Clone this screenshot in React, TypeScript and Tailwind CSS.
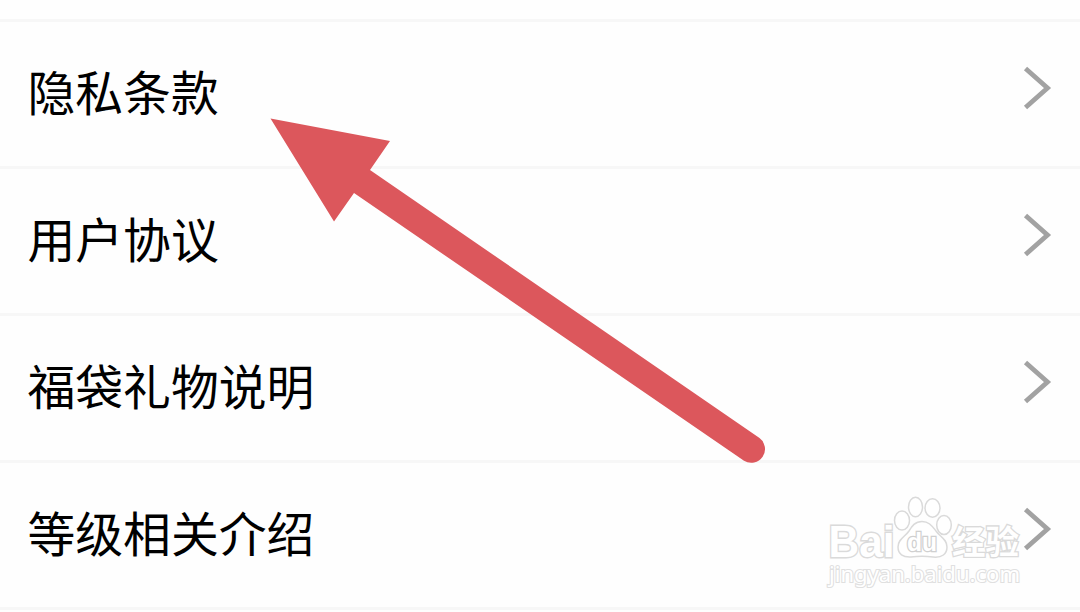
const itens = ["隐私条款", "用户协议", "福袋礼物说明", "等级相关介绍"];

function Chevron() {
  return (
    <svg width="30" height="48" viewBox="0 0 30 48" fill="none" className="shrink-0 blur-[0.7px]">
      <path d="M3.5 4.5 L25.5 24 L3.5 43.5" stroke="#a2a2a2" strokeWidth="4.8" />
    </svg>
  );
}

function Arrow() {
  return (
    <svg
      className="absolute left-0 top-0 pointer-events-none"
      width="1080"
      height="612"
      viewBox="0 0 1080 612"
    >
      <path
        d="M270.5 118.5 L390 141 L370 170 L759.5 438 A13.8 13.8 0 0 1 744 460.8 L354 193 L334 221.5 Z"
        fill="#dc575c"
      />
    </svg>
  );
}

function Watermark() {
  return (
    <svg
      className="absolute left-[820px] top-[485px] pointer-events-none"
      width="210"
      height="115"
      viewBox="0 0 210 115"
      fill="#ffffff"
      stroke="#dadada"
      strokeWidth="1.5"
    >
      <text
        x="8.5"
        y="71.5"
        fontSize="45"
        textLength="66"
        lengthAdjust="spacingAndGlyphs"
        strokeWidth="2.8"
        paintOrder="stroke"
        className="font-['Liberation_Sans',sans-serif] font-bold"
      >
        Bai
      </text>
      <ellipse cx="82" cy="35.5" rx="7.5" ry="9.5" />
      <ellipse cx="95.5" cy="22" rx="7" ry="9.8" />
      <ellipse cx="112.5" cy="23" rx="7.5" ry="9.3" />
      <ellipse cx="124" cy="40" rx="7.3" ry="9.5" />
      <path d="M102 36.5 C95 36.5 92 41 89 46 C85 52 78 54 78 62 C78 69 83 72.5 91 72 C99 71 105 71 113 72 C122 73 127 69 127 62 C127 54 120 52 116 46 C112 41 109 36.5 102 36.5 Z" />
      <text
        x="87"
        y="66"
        fontSize="25"
        textLength="30"
        lengthAdjust="spacingAndGlyphs"
        stroke="#d0d0d0"
        strokeWidth="2.6"
        paintOrder="stroke"
        className="font-['Liberation_Sans',sans-serif] font-bold"
      >
        du
      </text>
      <text
        x="132"
        y="69"
        fontSize="33.5"
        strokeWidth="2.6"
        paintOrder="stroke"
        className="font-['Noto_Sans_CJK_SC',sans-serif] font-bold"
      >
        经验
      </text>
      <text
        x="9"
        y="97"
        fontSize="22.5"
        textLength="191"
        lengthAdjust="spacingAndGlyphs"
        strokeWidth="2.2"
        paintOrder="stroke"
        stroke="#e0e0e0"
        className="font-['Noto_Sans',sans-serif]"
      >
        jingyan.baidu.com
      </text>
    </svg>
  );
}

export default function App() {
  return (
    <main className="relative w-[1080px] h-[612px] overflow-hidden bg-[#fefefe] pt-[19px] font-['Noto_Sans_CJK_SC',sans-serif]">
      <ul className="border-t-3 border-[#f7f7f7]">
        {itens.map((item) => (
          <li
            key={item}
            className="flex h-[147px] items-center justify-between border-b-3 border-[#f7f7f7] pl-[27.5px] pr-[28px]"
          >
            <span className="-mt-[7px] text-[47.8px] leading-none text-black">{item}</span>
            <div className="-mt-[12px]">
              <Chevron />
            </div>
          </li>
        ))}
      </ul>

      <Arrow />
      <Watermark />
    </main>
  );
}
